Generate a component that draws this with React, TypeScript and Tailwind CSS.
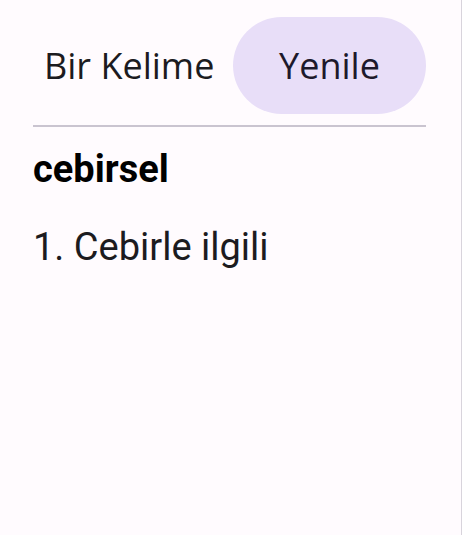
import React from 'react';

export default function App() {
  return (
    <div className="w-[462px] h-[535px] bg-[#fffbfe] overflow-hidden border-r border-[#d8d4dc]">
      <div className="pl-[33px] pr-[35px] pt-[17px]">
        <div className="flex items-center">
          <div className="flex-1 pl-[11px] text-[36px] leading-none text-[#1c1b1f] font-['Open_Sans',sans-serif]">
            Bir Kelime
          </div>
          <button className="w-[193px] h-[97px] rounded-full bg-[#e8def8] text-[36px] leading-none text-[#1d192b] font-['Open_Sans',sans-serif]">
            Yenile
          </button>
        </div>
        <div className="mt-[11px] h-[2px] bg-[#cac4d0]" />
        <div className="mt-[22px] font-['Roboto',sans-serif] text-[#000000]">
          <div className="text-[38px] leading-[40px] font-bold">cebirsel</div>
          <div className="mt-[36px] text-[38px] leading-[44px] text-[#1c1b1f]">1. Cebirle ilgili</div>
        </div>
      </div>
    </div>
  );
}
